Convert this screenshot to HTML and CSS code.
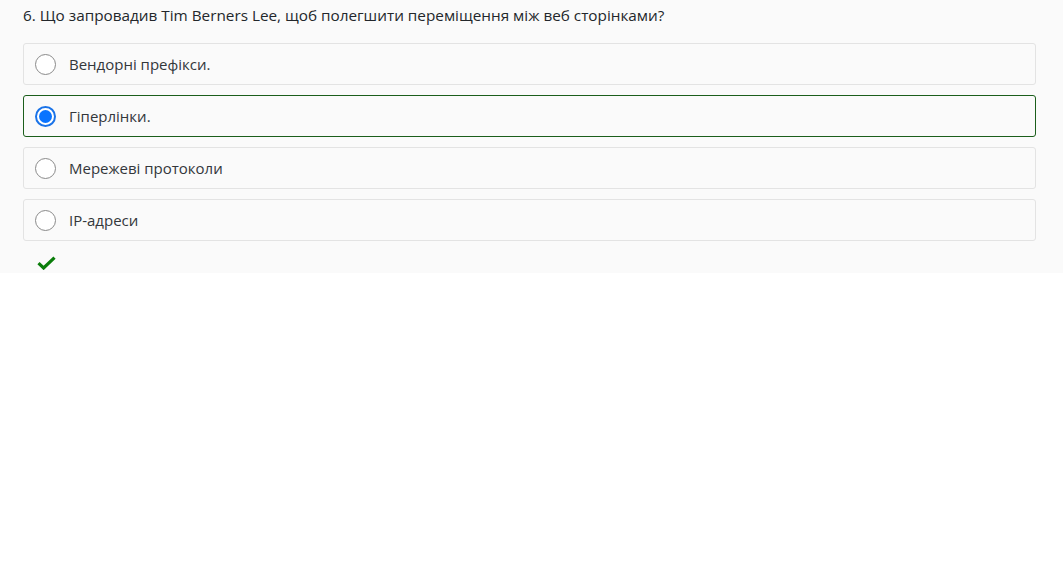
FILE: index.html
```html
<!DOCTYPE html>
<html lang="uk">
<head>
<meta charset="utf-8">
<link rel="stylesheet" href="styles.css">
</head>
<body>
<div class="quiz">
  <div class="question">6. Що запровадив Tim Berners Lee, щоб полегшити переміщення між веб сторінками?</div>
  <div class="options">
    <label class="option"><span class="radio"></span><span class="label">Вендорні префікси.</span></label>
    <label class="option selected"><span class="radio checked"></span><span class="label">Гіперлінки.</span></label>
    <label class="option"><span class="radio"></span><span class="label">Мережеві протоколи</span></label>
    <label class="option"><span class="radio"></span><span class="label">IP-адреси</span></label>
  </div>
  <div class="result">
    <svg class="check" width="19" height="14" viewBox="0 0 19 14"><path d="M1.5 7.2 L6.6 12 L17.5 1.6" fill="none" stroke="#0a7d0a" stroke-width="3.2" stroke-linejoin="miter"/></svg>
  </div>
</div>
</body>
</html>
```

FILE: styles.css
```css
html, body {
  margin: 0;
  padding: 0;
  background: #ffffff;
}
body {
  font-family: "Open Sans", "Liberation Sans", sans-serif;
  font-size: 15px;
  color: #2b2f33;
}
.quiz {
  background: #fafafa;
  padding: 5px 27px 0 23px;
  height: 268px;
}
.question {
  font-size: 15.3px;
  line-height: 20px;
  color: #23272b;
  margin-bottom: 18px;
}
.options {
  display: flex;
  flex-direction: column;
  gap: 10px;
}
.option {
  display: flex;
  align-items: center;
  height: 40px;
  border: 1px solid #e3e3e3;
  border-radius: 3px;
  padding: 0 11px;
  box-sizing: content-box;
  background: #fafafa;
}
.option.selected {
  border-color: #1b5e1b;
}
.radio {
  width: 19px;
  height: 19px;
  border: 1px solid #8a8a8a;
  border-radius: 50%;
  background: #fff;
  flex: none;
  position: relative;
}
.radio.checked {
  border: 2px solid #1a73e8;
  width: 17px;
  height: 17px;
  background: #fff;
}
.radio.checked::after {
  content: "";
  position: absolute;
  left: 2px;
  top: 2px;
  width: 13px;
  height: 13px;
  border-radius: 50%;
  background: #0a74ff;
}
.label {
  margin-left: 13px;
  color: #33373b;
  line-height: 20px;
}
.result {
  padding: 15px 0 0 14px;
}
.check {
  display: block;
}
```
